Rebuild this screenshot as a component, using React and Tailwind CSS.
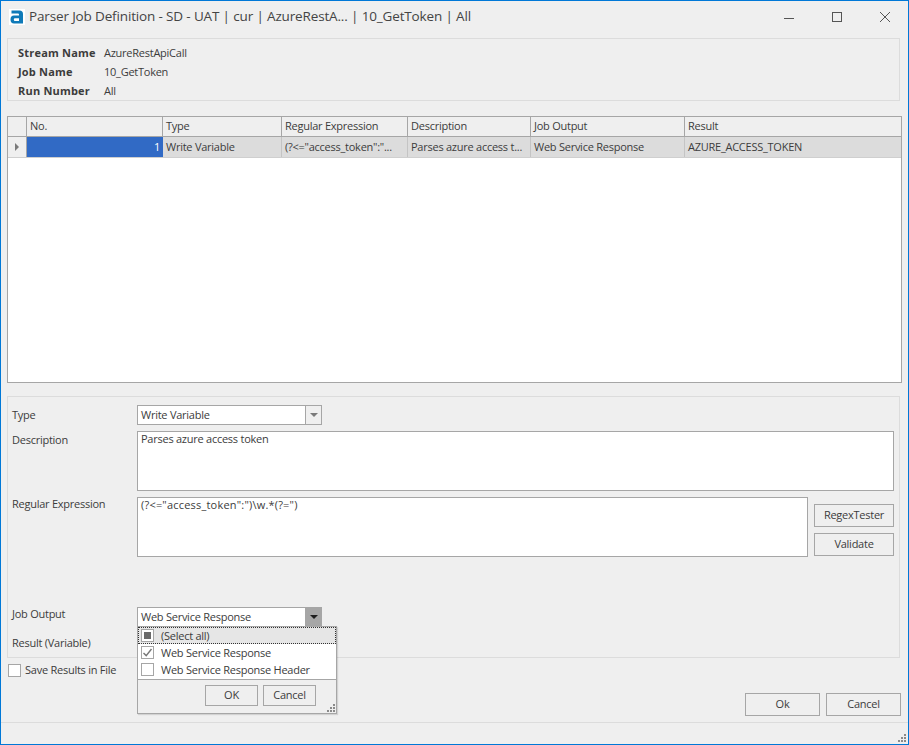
const columns = [
  { title: 'No.', width: 'w-[136px]' },
  { title: 'Type', width: 'w-[119px]' },
  { title: 'Regular Expression', width: 'w-[126px]' },
  { title: 'Description', width: 'w-[123px]' },
  { title: 'Job Output', width: 'w-[154px]' },
  { title: 'Result', width: 'flex-1' },
];

const cells = ['Write Variable', '(?<="access_token":"...', 'Parses azure access t...', 'Web Service Response', 'AZURE_ACCESS_TOKEN'];

function Grip({ className }) {
  return (
    <svg width="10" height="10" viewBox="0 0 10 10" className={className}>
      <g fill="#8a8a8a">
        <rect x="7" y="1" width="2" height="2" />
        <rect x="4" y="4" width="2" height="2" />
        <rect x="7" y="4" width="2" height="2" />
        <rect x="1" y="7" width="2" height="2" />
        <rect x="4" y="7" width="2" height="2" />
        <rect x="7" y="7" width="2" height="2" />
      </g>
    </svg>
  );
}

function Button({ children, className = '' }) {
  return (
    <div className={`flex items-center justify-center border border-[#a6a6a6] bg-[#efefef] text-[#3c3c3c] ${className}`}>
      {children}
    </div>
  );
}

function Combo({ value, active }) {
  return (
    <div className="flex h-[20px] w-[185px] border border-[#a6a6a6] bg-white">
      <div className="flex-1 pl-[3px] leading-[17px]">{value}</div>
      <div className={`flex w-[16px] items-center justify-center border-l border-[#a6a6a6] ${active ? 'bg-[#a6a6a6]' : 'bg-[#efefef]'}`}>
        <div className={`h-0 w-0 border-x-[4px] border-t-[4px] border-x-transparent ${active ? 'border-t-[#1e1e1e]' : 'border-t-[#7a7a7a]'}`} />
      </div>
    </div>
  );
}

function CheckRow({ label, state, focused }) {
  return (
    <div className={`flex h-[17px] items-center pl-[3px] ${focused ? 'bg-[#e6e6e6] outline-1 -outline-offset-1 outline-dotted outline-[#333]' : ''}`}>
      <div className="flex h-[13px] w-[13px] items-center justify-center border border-[#a6a6a6] bg-white">
        {state === 'mixed' && <div className="h-[7px] w-[7px] bg-[#6a6a6a]" />}
        {state === 'checked' && (
          <svg width="11" height="11" viewBox="0 0 11 11">
            <path d="M1.5 6 L4.2 8.6 L9.5 2" fill="none" stroke="#777" strokeWidth="1.4" />
          </svg>
        )}
      </div>
      <span className="ml-[7px] pt-[2px]">{label}</span>
    </div>
  );
}

export default function App() {
  return (
    <div className="relative flex h-[745px] w-[909px] flex-col border border-[#0078d7] bg-[#efefef] font-['Open_Sans','Liberation_Sans',sans-serif] text-[11px] tracking-[-0.25px] text-[#3c3c3c]">
      {/* title bar */}
      <div className="flex h-[37px] shrink-0 items-center pb-[6px]">
        <svg width="16" height="16" viewBox="0 0 16 16" className="ml-[8px] mt-[1px]">
          <rect width="16" height="16" fill="#fff" />
          <path d="M2.5 1.5 H10.5 Q14 1.5 14 5 V14.5 H5 Q1.5 14.5 1.5 10.5 Q1.5 6.6 5 6.6 H10 V5.6 Q10 4.6 9 4.6 H2.5 Z M6 9.2 Q4.8 9.2 4.8 10.4 Q4.8 11.9 6 11.9 H10 V9.2 Z" fill="#0f7ab8" fillRule="evenodd" />
        </svg>
        <div className="ml-[4px] font-['Open_Sans',sans-serif] text-[13.5px] tracking-[-0.15px] text-[#444]">
          Parser Job Definition - SD - UAT | cur | AzureRestA... | 10_GetToken | All
        </div>
        <div className="ml-auto flex items-center">
          <svg width="12" height="12" viewBox="0 0 12 12"><path d="M1 7.5 H11" stroke="#555" strokeWidth="1" /></svg>
          <svg width="12" height="12" viewBox="0 0 12 12" className="ml-[36px]"><rect x="1.5" y="1.5" width="9" height="9" fill="none" stroke="#555" /></svg>
          <svg width="12" height="12" viewBox="0 0 12 12" className="ml-[36px] mr-[17px]"><path d="M1 1 L11 11 M11 1 L1 11" stroke="#555" strokeWidth="1" /></svg>
        </div>
      </div>

      {/* job summary */}
      <div className="ml-[6px] h-[63px] w-[893px] shrink-0 border border-[#dcdcdc] pl-[10px] pt-[5px]">
        {[['Stream Name', 'AzureRestApiCall'], ['Job Name', '10_GetToken'], ['Run Number', 'All']].map(([label, value]) => (
          <div key={label} className="flex h-[19px] items-center">
            <div className="w-[86px] font-bold tracking-[0.2px]">{label}</div>
            <div>{value}</div>
          </div>
        ))}
      </div>

      {/* parser grid */}
      <div className="ml-[6px] mt-[15px] h-[267px] w-[895px] shrink-0 border border-[#a6a6a6] bg-white">
        <div className="flex h-[20px] border-b border-[#a6a6a6] bg-[#efefef]">
          <div className="w-[19px] border-r border-[#a6a6a6]" />
          {columns.map((col, i) => (
            <div key={col.title} className={`${col.width} pl-[3px] leading-[17px] ${i < columns.length - 1 ? 'border-r border-[#a6a6a6]' : ''}`}>
              {col.title}
            </div>
          ))}
        </div>
        <div className="flex h-[21px] border-b border-[#cfcfcf] bg-[#dcdcdc]">
          <div className="flex w-[19px] items-center justify-center border-r border-[#a6a6a6] bg-[#efefef]">
            <div className="h-0 w-0 border-y-[4px] border-l-[4px] border-y-transparent border-l-[#7a7a7a]" />
          </div>
          <div className="w-[136px] bg-[#316ac5] pr-[3px] text-right leading-[20px] text-white">1</div>
          {cells.map((text, i) => (
            <div key={text} className={`${columns[i + 1].width} pl-[3px] leading-[20px] ${i < cells.length - 1 ? 'border-r border-[#c4c4c4]' : ''}`}>
              {text}
            </div>
          ))}
        </div>
      </div>

      {/* detail form */}
      <div className="ml-[6px] mt-[13px] h-[262px] w-[893px] shrink-0 border border-[#dcdcdc] pt-[8px]">
        <div className="flex">
          <div className="w-[129px] pl-[4px] leading-[20px]">Type</div>
          <Combo value="Write Variable" />
        </div>
        <div className="mt-[6px] flex">
          <div className="w-[129px] pl-[4px] leading-[18px]">Description</div>
          <div className="h-[60px] w-[757px] border border-[#a6a6a6] bg-white pl-[3px] leading-[14px]">Parses azure access token</div>
        </div>
        <div className="mt-[6px] flex">
          <div className="w-[129px] pl-[4px] leading-[14px]">Regular Expression</div>
          <div className="h-[60px] w-[671px] border border-[#a6a6a6] bg-white pl-[3px] leading-[14px] tracking-[0.2px]">{'(?<="access_token":")\\w.*(?=")'}</div>
          <div className="ml-[6px] mt-[6px] flex flex-col gap-[6px] pt-[1px]">
            <Button className="h-[23px] w-[80px]">RegexTester</Button>
            <Button className="h-[23px] w-[80px]">Validate</Button>
          </div>
        </div>
        <div className="mt-[50px] flex">
          <div className="w-[129px] pl-[4px] leading-[14px]">Job Output</div>
          <Combo value="Web Service Response" active />
        </div>
        <div className="mt-[9px] pl-[4px] leading-[14px]">Result (Variable)</div>
      </div>

      {/* save option */}
      <div className="ml-[7px] mt-[5px] flex h-[14px] shrink-0 items-center">
        <div className="h-[13px] w-[13px] border border-[#a6a6a6] bg-white" />
        <span className="ml-[4px]">Save Results in File</span>
      </div>

      <div className="ml-[744px] mt-[16px] flex shrink-0 gap-[6px]">
        <Button className="h-[23px] w-[75px]">Ok</Button>
        <Button className="h-[23px] w-[75px]">Cancel</Button>
      </div>

      {/* status bar */}
      <div className="relative mt-[6px] flex-1 border-t border-[#dcdcdc]">
        <Grip className="absolute bottom-[1px] right-[1px]" />
      </div>

      {/* checked combo dropdown */}
      <div className="absolute left-[136px] top-[625px] flex h-[88px] w-[200px] flex-col border border-[#a6a6a6] bg-white shadow-[1px_1px_1px_rgba(0,0,0,0.12)]">
        <CheckRow label="(Select all)" state="mixed" focused />
        <CheckRow label="Web Service Response" state="checked" />
        <CheckRow label="Web Service Response Header" />
        <div className="relative mt-[1px] flex flex-1 justify-end gap-[5px] border-t border-[#a6a6a6] bg-[#efefef] pr-[20px] pt-[5px]">
          <Button className="h-[21px] w-[53px]">OK</Button>
          <Button className="h-[21px] w-[53px]">Cancel</Button>
          <Grip className="absolute bottom-0 right-0" />
        </div>
      </div>
    </div>
  );
}
